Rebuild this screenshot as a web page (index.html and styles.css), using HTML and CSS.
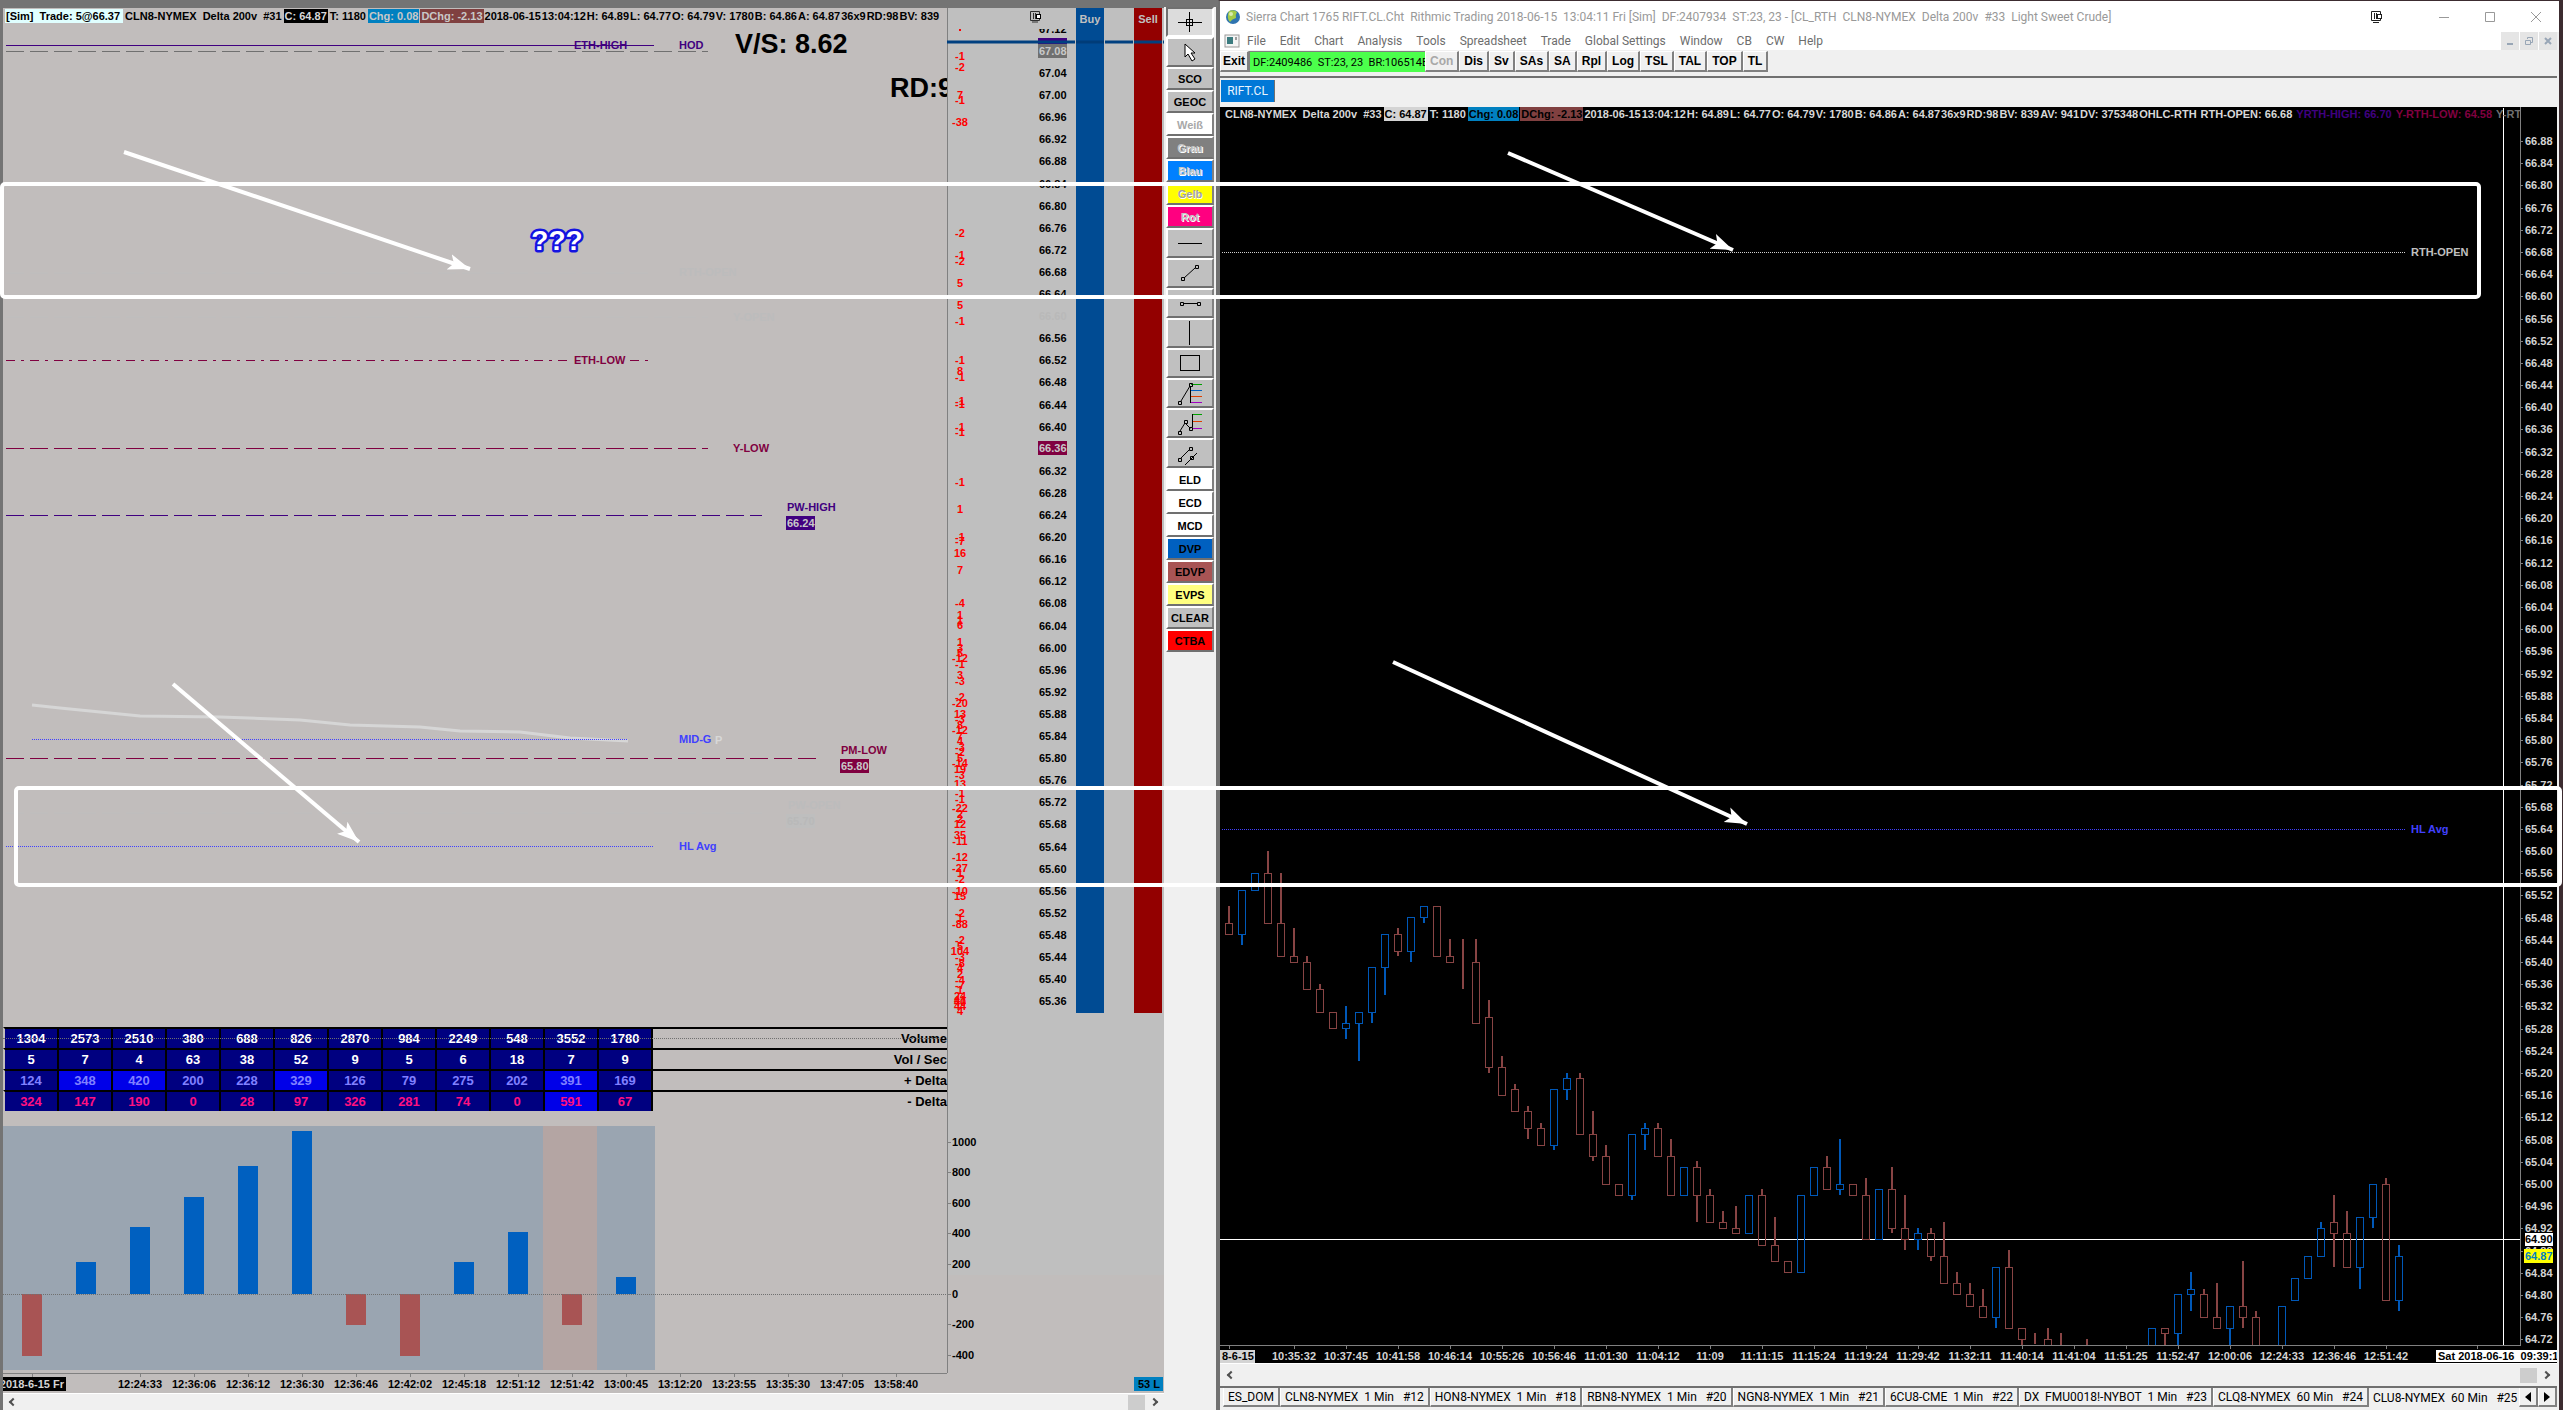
FILE: index.html
```html
<!DOCTYPE html>
<html lang="en">
<head>
<meta charset="utf-8">
<title>Sierra Chart 1765 RIFT.CL.Cht</title>
<link rel="stylesheet" href="styles.css">
</head>
<body>
<main class="desk">
  <section class="dom-window">
    <div class="dom-body">
      <div class="flow-pane">
        <header class="quote-line">
          <span class="tag tag-sim">[Sim]  Trade: 5@66.37</span>
          <span class="tag">CLN8-NYMEX  Delta 200v  #31</span>
          <span class="tag tag-last-dark">C: 64.87</span>
          <span class="tag">T: 1180</span>
          <span class="tag tag-chg">Chg: 0.08</span>
          <span class="tag tag-dchg">DChg: -2.13</span>
          <div class="fields"><span>2018-06-15</span><span>13:04:12</span><span>H: 64.89</span><span>L: 64.77</span><span>O: 64.79</span><span>V: 1780</span><span>B: 64.86</span><span>A: 64.87</span><span>36x9</span><span>RD:98</span><span>BV: 839</span></div>
        </header>
        <svg class="level-chart" aria-label="Price levels">
          <g transform="translate(-3 -24)">
            <path class="faint-line" d="M6 273H654M6 317H708M6 813H762"/>
            <text class="faint" x="679" y="276">RTH-OPEN</text>
            <text class="faint" x="733" y="321">Y-OPEN</text>
            <text class="faint" x="788" y="809">PW-OPEN</text>
            <rect class="faint-box" x="786" y="814" width="29" height="14"/>
            <text class="faint-on" x="787" y="825">65.70</text>

            <path class="high" d="M6 45.500H654"/>
            <path class="gray long-dash" d="M6 51.500H708"/>
            <text class="t-high" x="574" y="49">ETH-HIGH</text>
            <text class="t-high" x="679" y="49">HOD</text>
            <text class="big" x="735" y="53">V/S: 8.62</text>
            <text class="big" x="890" y="97">RD:98</text>

            <path class="low dash-dot" d="M6 360.500H648"/>
            <rect class="pane-fill" x="569" y="352" width="60" height="16"/>
            <text class="t-low" x="574" y="364">ETH-LOW</text>
            <path class="low long-dash" d="M6 448.500H708"/>
            <text class="t-low" x="733" y="452">Y-LOW</text>
            <path class="high long-dash" d="M6 515.500H762"/>
            <text class="t-high" x="787" y="511">PW-HIGH</text>
            <rect class="box-high" x="786" y="516" width="29" height="14"/>
            <text class="t-box" x="787" y="527">66.24</text>

            <path class="vwap" d="M32 705L60 708L100 712L140 716L220 717L300 720L350 725L420 727L460 731L520 732L570 738L628 741"/>
            <path class="mid dots" d="M32 739.500H628"/>
            <text class="t-mid" x="679" y="743">MID-G</text>
            <text class="t-light" x="715" y="744">P</text>
            <path class="low long-dash" d="M6 758.500H816"/>
            <text class="t-low" x="841" y="754">PM-LOW</text>
            <rect class="box-low" x="840" y="759" width="29" height="14"/>
            <text class="t-box" x="841" y="770">65.80</text>
            <path class="mid dots" d="M6 846.500H654"/>
            <text class="t-mid" x="679" y="850">HL Avg</text>
          </g>
        </svg>
        <table class="stats">
          <tbody>
            <tr><td>1304</td><td>2573</td><td>2510</td><td>380</td><td>688</td><td>826</td><td>2870</td><td>984</td><td>2249</td><td>548</td><td>3552</td><td>1780</td><th scope="row">Volume</th></tr>
            <tr><td>5</td><td>7</td><td>4</td><td>63</td><td>38</td><td>52</td><td>9</td><td>5</td><td>6</td><td>18</td><td>7</td><td>9</td><th scope="row">Vol / Sec</th></tr>
            <tr class="plus"><td>124</td><td class="hot">348</td><td class="hot">420</td><td>200</td><td>228</td><td class="hot">329</td><td>126</td><td>79</td><td>275</td><td>202</td><td class="hot">391</td><td>169</td><th scope="row">+ Delta</th></tr>
            <tr class="minus"><td>324</td><td>147</td><td>190</td><td>0</td><td>28</td><td>97</td><td>326</td><td>281</td><td>74</td><td>0</td><td class="hot">591</td><td>67</td><th scope="row">- Delta</th></tr>
          </tbody>
        </table>
        <svg class="delta-chart" aria-label="Delta histogram">
          <g transform="translate(-3 -1111)">
            <rect fill="#9aa5b1" x="3" y="1126" width="652" height="244"/>
            <rect fill="#b4a5a3" x="543" y="1126" width="54" height="244"/>
            <g id="delta-bars"></g>
            <path class="zero" d="M3 1294.500H947"/>
          </g>
        </svg>
        <svg class="time-axis" aria-label="Time axis"><g id="left-times" transform="translate(-3 -1373)"></g></svg>
      </div>
      <div class="ladder">
        <svg class="ladder-chart" aria-label="Price ladder">
          <g transform="translate(-947 -8)">
            <rect x="947" y="8" width="217" height="1267" fill="#bfbfbf"/>
            <rect x="1076" y="8" width="28" height="1005" fill="#004b93"/>
            <rect x="1134" y="8" width="28" height="1005" fill="#930000"/>
            <text class="side" x="1090" y="23">Buy</text>
            <text class="side" x="1148" y="23">Sell</text>
            <path d="M947.500 8V1373" stroke="#808080"/>
            <g id="ladder-prices"></g>
            <rect x="1038" y="20" width="30" height="9" fill="#bfbfbf"/>
            <rect class="box-high" x="1038" y="38" width="29" height="7"/>
            <path d="M947 42H1075M1105 42H1133M1163 42H1164" stroke="#004080" stroke-width="3"/>
            <path d="M1076 42H1104" stroke="#003c78" stroke-width="3"/>
            <path d="M1134 42H1162" stroke="#004080" stroke-width="3"/>
            <rect x="1038" y="44" width="29" height="14" fill="#707070"/>
            <text class="t-box" x="1039" y="55">67.08</text>
            <rect class="box-low" x="1038" y="441" width="29" height="14"/>
            <text class="t-box" x="1039" y="452">66.36</text>
            <g id="ladder-flow"></g>
            <g id="delta-scale"></g>
            <rect x="1134" y="1377" width="29" height="14" fill="#0080c0"/>
            <text class="axis-text mid-anchor" x="1149" y="1388">53 L</text>
            <g fill="none" stroke="#303030"><path d="M1030.500 11.500H1039.500V20.500H1030.500Z"/><path d="M1033.500 13V19M1035.500 13V19M1032 22H1038"/><rect x="1036.500" y="14.500" width="4" height="4" fill="#fff" stroke="#000"/></g>
          </g>
        </svg>
      </div>
      <nav class="tools" aria-label="Drawing tools">
        <button class="tool pressed" aria-label="Crosshair"><svg width="30" height="24"><path d="M3 12.500H27M14.500 2V22" stroke="#000"/><rect x="11.500" y="9.500" width="6" height="6" fill="none" stroke="#000"/></svg></button>
        <button class="tool" aria-label="Pointer"><svg width="30" height="24"><path d="M10 4V17L13 14L17 21L20 19L16 13H20Z" fill="#fff" stroke="#000"/></svg></button>
        <button class="tool word">SCO</button>
        <button class="tool word">GEOC</button>
        <button class="tool word off white">Weiß</button>
        <button class="tool word off grey">Grau</button>
        <button class="tool word off blue">Blau</button>
        <button class="tool word off yellow">Gelb</button>
        <button class="tool word off pink">Rot</button>
        <button class="tool" aria-label="Horizontal line"><svg width="30" height="24"><path d="M3 12.500H27" stroke="#000"/></svg></button>
        <button class="tool" aria-label="Line"><svg width="30" height="24" fill="none" stroke="#000"><path d="M9 17L20 7"/><path d="M6.500 16.500H9.500V19.500H6.500ZM20.500 4.500H23.500V7.500H20.500Z"/></svg></button>
        <button class="tool" aria-label="Horizontal ray"><svg width="30" height="24" fill="none" stroke="#000"><path d="M8 12.500H22"/><path d="M5.500 11.500H8.500V14.500H5.500ZM22.500 11.500H25.500V14.500H22.500Z"/></svg></button>
        <button class="tool" aria-label="Vertical line"><svg width="30" height="24"><path d="M14.500 0V24" stroke="#000"/></svg></button>
        <button class="tool" aria-label="Rectangle"><svg width="30" height="24"><rect x="5.500" y="4.500" width="19" height="15" fill="none" stroke="#000"/></svg></button>
        <button class="tool" aria-label="Retracement"><svg width="30" height="24" fill="none"><path d="M16 3.500H27" stroke="#00a000"/><path d="M16 9.500H27" stroke="#0060c0"/><path d="M16 15.500H27" stroke="#e04000"/><path d="M16 21.500H27" stroke="#a000c0"/><path d="M6 20L15 5M15.500 5V22M3.500 20.500H6.500V23.500H3.500ZM14.500 2.500H17.500V5.500H14.500Z" stroke="#000"/></svg></button>
        <button class="tool" aria-label="Extension"><svg width="30" height="24" fill="none"><path d="M18 3.500H27" stroke="#00a000"/><path d="M18 10.500H27" stroke="#e04000"/><path d="M18 17.500H27" stroke="#a000c0"/><path d="M5 20L10 12L15 17L17.500 16V3M3.500 20.500H6.500V23.500H3.500ZM9.500 9.500H12.500V12.500H9.500ZM14.500 16.500H17.500V19.500H14.500Z" stroke="#000"/></svg></button>
        <button class="tool" aria-label="Parallel lines"><svg width="30" height="24" fill="none" stroke="#000"><path d="M6 17L15 8M10 24L22 12M3.500 17.500H6.500V20.500H3.500ZM14.500 6.500H17.500V9.500H14.500ZM15.500 15.500H18.500V18.500H15.500Z"/></svg></button>
        <button class="tool word white">ELD</button>
        <button class="tool word white">ECD</button>
        <button class="tool word white">MCD</button>
        <button class="tool word deep">DVP</button>
        <button class="tool word brick">EDVP</button>
        <button class="tool word cream">EVPS</button>
        <button class="tool word">CLEAR</button>
        <button class="tool word red">CTBA</button>
      </nav>
      <div class="scroll dom-scroll">
        <span class="chev left"></span><span class="thumb"></span><span class="chev right"></span>
      </div>
    </div>
  </section>

  <section class="chart-window">
    <header class="title-bar">
      <svg class="app-icon" width="16" height="16"><circle cx="8" cy="8" r="7" fill="#2f74b0"/><path d="M4 2Q9 0 12 3Q10 6 11 9Q7 10 5 13Q1 9 4 2Z" fill="#a4cc48"/><circle cx="6" cy="5" r="2" fill="#d9ecb0"/></svg>
      <h1>Sierra Chart 1765 RIFT.CL.Cht  Rithmic Trading 2018-06-15  13:04:11 Fri [Sim]  DF:2407934  ST:23, 23 - [CL_RTH  CLN8-NYMEX  Delta 200v  #33  Light Sweet Crude]</h1>
      <svg class="monitor" width="14" height="14" fill="none" stroke="#202020"><path d="M1.500 1.500H10.500V10.500H1.500ZM4.500 3V9M6.500 3V9M3 12.500H9"/><rect x="7.500" y="4.500" width="4" height="4" fill="#fff"/></svg>
      <button class="cap" aria-label="Minimize"><svg width="12" height="12"><path d="M1 6.500H11" stroke="#999"/></svg></button>
      <button class="cap" aria-label="Maximize"><svg width="12" height="12"><path d="M1.500 1.500H10.500V10.500H1.500Z" fill="none" stroke="#999"/></svg></button>
      <button class="cap" aria-label="Close"><svg width="12" height="12"><path d="M1 1L11 11M11 1L1 11" stroke="#999"/></svg></button>
    </header>
    <nav class="menu-bar">
      <svg width="16" height="14"><rect x="1" y="1" width="14" height="12" fill="#f4f4f4" stroke="#999"/><rect x="3" y="3" width="6" height="7" fill="#3c7c80"/><path d="M12 3V6" stroke="#444"/></svg>
      <button>File</button><button>Edit</button><button>Chart</button><button>Analysis</button><button>Tools</button><button>Spreadsheet</button><button>Trade</button><button>Global Settings</button><button>Window</button><button>CB</button><button>CW</button><button>Help</button>
      <div class="mdi">
        <button aria-label="Minimize chart"><svg width="10" height="10"><path d="M2 8H8" stroke="#98a6b6" stroke-width="2"/></svg></button>
        <button aria-label="Restore chart"><svg width="10" height="10" fill="none" stroke="#98a6b6"><path d="M3.500 3V1.500H8.500V6.500H7M1.500 4.500H6.500V8.500H1.500Z"/></svg></button>
        <button aria-label="Close chart"><svg width="10" height="10"><path d="M2 2L8 8M8 2L2 8" stroke="#98a6b6" stroke-width="2"/></svg></button>
      </div>
    </nav>
    <div class="control-bar">
      <button>Exit</button>
      <output class="feed">DF:2409486  ST:23, 23  BR:106514B</output>
      <button disabled>Con</button><button>Dis</button><button>Sv</button><button>SAs</button><button>SA</button><button>Rpl</button><button>Log</button><button>TSL</button><button>TAL</button><button>TOP</button><button>TL</button>
    </div>
    <div class="book-bar"><button>RIFT.CL</button></div>
    <div class="plot">
      <svg class="candle-chart" aria-label="Candlestick chart">
        <defs><clipPath id="plot-clip"><rect x="1220" y="107" width="1300" height="1238"/></clipPath></defs>
        <g transform="translate(-1220 -107)">
          <path class="open dots" d="M1222 252.500H2406"/>
          <text class="t-open" x="2411" y="256">RTH-OPEN</text>
          <path class="mid dots" d="M1222 829.500H2406"/>
          <text class="t-mid" x="2411" y="833">HL Avg</text>
          <path d="M1220 1239.500H2520" stroke="#fff"/>
          <g id="candles" clip-path="url(#plot-clip)"></g>
          <path d="M2503.500 108V1345" stroke="#fff"/>
          <path d="M2520.500 107V1345M1220 1345.500H2521" stroke="#808080"/>
          <g id="right-prices"></g>
          <rect x="2525" y="1233" width="28" height="13" fill="#fff"/>
          <text class="axis-text" x="2525" y="1243">64.90</text>
          <rect x="2524" y="1249" width="29" height="14" fill="#ff0"/>
          <text class="t-last" x="2525" y="1260">64.87</text>
          <g id="right-times"></g>
          <rect x="1220" y="1350" width="35" height="13" fill="#d4d4d4"/>
          <text class="axis-text" x="1222" y="1360">8-6-15</text>
          <rect x="2436" y="1350" width="121" height="12" fill="#fff"/>
          <text class="axis-text" x="2438" y="1360">Sat 2018-06-16  09:39:11</text>
        </g>
      </svg>
      <div class="quote-line dark">
        <span class="tag">CLN8-NYMEX  Delta 200v  #33</span>
        <span class="tag tag-last-light">C: 64.87</span>
        <span class="tag">T: 1180</span>
        <span class="tag tag-chg">Chg: 0.08</span>
        <span class="tag tag-dchg">DChg: -2.13</span>
        <div class="fields"><span>2018-06-15</span><span>13:04:12</span><span>H: 64.89</span><span>L: 64.77</span><span>O: 64.79</span><span>V: 1780</span><span>B: 64.86</span><span>A: 64.87</span><span>36x9</span><span>RD:98</span><span>BV: 839</span><span>AV: 941</span><span>DV: 375348</span><span>OHLC-RTH</span><span class="study">RTH-OPEN: 66.68</span><span class="study t-yhigh">YRTH-HIGH: 66.70</span><span class="study t-ylow">Y-RTH-LOW: 64.58</span><span class="study t-yrt">Y-RTH</span></div>
      </div>
    </div>
    <div class="scroll"><span class="chev left"></span><span class="thumb"></span><span class="chev right"></span></div>
    <nav class="sheet-tabs">
      <button>ES_DOM</button><button>CLN8-NYMEX  1 Min   #12</button><button>HON8-NYMEX  1 Min   #18</button><button>RBN8-NYMEX  1 Min   #20</button><button>NGN8-NYMEX  1 Min   #21</button><button>6CU8-CME  1 Min   #22</button><button>DX  FMU0018!-NYBOT  1 Min   #23</button><button>CLQ8-NYMEX  60 Min   #24</button><button class="cut">CLU8-NYMEX  60 Min   #25</button>
      <button class="step" aria-label="Previous tabs"><svg width="8" height="12"><path d="M7 1V11L1 6Z"/></svg></button>
      <button class="step" aria-label="Next tabs"><svg width="8" height="12"><path d="M1 1V11L7 6Z"/></svg></button>
    </nav>
  </section>

  <svg class="notes" viewBox="0 0 2563 1410" preserveAspectRatio="none" aria-label="Annotations">
    <defs><marker id="head" markerUnits="userSpaceOnUse" markerWidth="26" markerHeight="20" refX="22" refY="9" orient="auto"><path d="M0 1L22 9L0 17L5 9Z" fill="#fff"/></marker></defs>
    <g fill="none" stroke="#fff" stroke-width="4">
      <rect x="2" y="184" width="2477" height="113" rx="3"/>
      <rect x="16" y="788" width="2544" height="97" rx="3"/>
      <path d="M124 152L470 269" marker-end="url(#head)"/>
      <path d="M1508 153L1733 250" marker-end="url(#head)"/>
      <path d="M173 684L359 842" marker-end="url(#head)"/>
      <path d="M1393 662L1747 824" marker-end="url(#head)"/>
    </g>
    <text class="doubt" x="557" y="250">???</text>
  </svg>
</main>
<script src="charts.js"></script>
</body>
</html>
```

FILE: styles.css
```css
* { box-sizing: border-box; }
body {
  margin: 0;
  background: #747474;
  font: bold 11px/14px "Liberation Sans", Arial, sans-serif;
  color: #000;
}
button { font: inherit; color: inherit; margin: 0; padding: 0; border: 0; background: none; white-space: pre; }
svg { display: block; }
text { font: bold 11px "Liberation Sans", Arial, sans-serif; white-space: pre; }

.desk { position: relative; display: grid; grid-template-columns: 1218fr 1345fr; height: 100vh; min-height: 900px; overflow: hidden; }

/* Left window: levels, ladder and tools */
.dom-window { display: flex; flex-direction: column; min-width: 0; padding-top: 8px; background: #747474; border-left: 3px solid #747474; }
.dom-body { flex: 1; min-height: 0; display: grid; grid-template-columns: 1fr 217px 54px; grid-template-rows: 1fr 17px; }
.flow-pane { display: flex; flex-direction: column; min-width: 0; background: #c1bdbc; }
.quote-line { display: flex; flex: none; height: 16px; padding: 1px 2px; gap: 1px; overflow: hidden; white-space: pre; }
.tag { flex: none; padding: 0 1px; height: 14px; }
.fields { display: flex; flex: none; gap: 1px; }
.tag-sim { background: #e0ffff; padding-right: 3px; }
.tag-last-dark { background: #000; color: #d8d8d8; }
.tag-last-light { background: #d4d4d4; color: #000; }
.tag-chg { background: #0080c0; color: #c8c8c8; }
.tag-dchg { background: #804040; color: #c8c8c8; }
.level-chart { flex: 1; min-height: 0; width: 100%; }
.delta-chart { flex: none; width: 100%; height: 262px; }
.time-axis { flex: none; width: 100%; height: 20px; }

.high { stroke: #400080; }
.low { stroke: #800040; }
.gray { stroke: #707070; }
.mid { stroke: #4040ff; }
.open { stroke: #d0d0d0; }
.zero { stroke: #707070; stroke-dasharray: 1 1; }
.dots { stroke-dasharray: 1 1; }
.long-dash { stroke-dasharray: 18 6; }
.dash-dot { stroke-dasharray: 9 6 3 6; }
.vwap { fill: none; stroke: #d6d6d6; stroke-width: 3; }
.faint-line { stroke: #bebebe; stroke-dasharray: 18 6; }
.faint { fill: #bcbcbc; }
.faint-box { fill: #bebebe; }
.faint-on { fill: #b9b9b9; }
.pane-fill { fill: #c1bdbc; }
.box-high { fill: #400080; }
.box-low { fill: #800040; }
.t-high { fill: #400080; }
.t-low { fill: #800040; }
.t-mid { fill: #4040ff; }
.t-open { fill: #c0c0c0; }
.t-light { fill: #d8d8d8; }
.t-box { fill: #c8c8c8; }
.t-last { fill: #0080c0; }
.t-flow { fill: #f00; text-anchor: middle; }
.big { font-size: 27px; }
.side { fill: #c0c0c0; text-anchor: middle; }
.axis-text { fill: #000; }
.axis-light { fill: #d4d4d4; }
.mid-anchor { text-anchor: middle; }

.stats { position: relative; width: 100%; table-layout: fixed; border-spacing: 0; font-size: 13px; line-height: 19px; color: #fff; }
.stats::after { content: ""; position: absolute; left: 0; right: 0; top: 11px; border-top: 1px dotted #707070; }
.stats td, .stats th { height: 21px; padding: 0; border-top: 2px solid #000; }
.stats td { width: 54px; text-align: center; background: #000080; border-right: 2px solid #000; }
.stats td:first-child { width: 56px; border-left: 2px solid #c1bdbc; }
.stats th { text-align: right; color: #000; }
.stats .hot { background: #0000e8; }
.stats .plus td { color: #8080ff; }
.stats .minus td { color: #ff1080; }

.ladder { min-width: 0; background: #c1bdbc; }
.ladder-chart { width: 100%; height: 100%; }

.tools { grid-row: 1 / 3; grid-column: 3; display: flex; flex-direction: column; margin-top: -1px; padding-left: 2px; padding-right: 2px; background: #f0f0f0; border-right: 2px solid #707070; }
.tool { display: flex; align-items: center; justify-content: center; height: 30px; background: #c0c0c0; border: 2px solid #fff; border-right-color: #808080; border-bottom-color: #707070; }
.tool.pressed { background: #dcdcdc; border-color: #707070 #fff #fff #707070; }
.tool.word { height: 23px; }
.tool.off { color: #c4c4c4; text-shadow: 1px 1px #fff; }
.tool.white { background: #fff; }
.tool.white.off { color: #a8a8a8; }
.tool.grey { background: #808080; }
.tool.blue { background: #0080ff; }
.tool.yellow { background: #ff0; color: #a0a0a0; }
.tool.pink { background: #ff0080; }
.tool.deep { background: #0060c0; }
.tool.brick { background: #a85454; }
.tool.cream { background: #ffff80; }
.tool.red { background: #f00; }

.scroll { display: flex; align-items: center; gap: 4px; height: 23px; padding: 0 6px; background: #f0f0f0; border-top: 1px solid #fff; }
.dom-scroll { grid-column: 1 / 3; height: 17px; padding: 0 5px; }
.thumb { width: 17px; height: 15px; margin-left: auto; background: #cdcdcd; }
.chev { width: 6px; height: 6px; margin: 0 2px; border: solid #505050; border-width: 2px 0 0 2px; transform: rotate(-45deg); }
.chev.right { transform: rotate(135deg); }

/* Right window: candle chart */
.chart-window { display: flex; flex-direction: column; min-width: 0; background: #f0f0f0; border: solid #3c2c30; border-width: 1px 4px 0 2px; border-left-color: #707070; padding-right: 2px; }
.title-bar, .menu-bar, .sheet-tabs, .book-bar { font: 12px/16px Roboto, "Open Sans", sans-serif; }
.title-bar { display: flex; align-items: center; flex: none; height: 31px; padding-left: 5px; background: #fff; color: #999; margin-right: -2px; }
.title-bar h1 { flex: 1; min-width: 0; margin: 0 0 0 5px; font: inherit; white-space: pre; overflow: hidden; }
.monitor { margin-right: 37px; }
.cap { display: flex; align-items: center; justify-content: center; width: 46px; height: 30px; }
.menu-bar { display: flex; align-items: center; flex: none; gap: 14px; height: 18px; padding-left: 4px; background: #fff; color: #6d6d6d; }
.menu-bar > svg { margin-right: -7px; }
.mdi { display: flex; gap: 1px; margin-left: auto; }
.mdi button { display: flex; align-items: center; justify-content: center; width: 18px; height: 18px; background: #e5e5e5; }
.control-bar { display: flex; flex: none; height: 28px; padding: 1px 0 4px; border-bottom: 2px solid #707070; font-size: 12px; }
.control-bar button { padding: 0 4px; border: 1px solid #fff; border-right: 2px solid #808080; border-bottom: 2px solid #808080; }
.control-bar button:first-child { padding: 0 2px; }
.control-bar button:disabled { color: #a8a8a8; }
.feed { font: 11px/16px Roboto, "Open Sans", sans-serif; width: 176px; overflow: hidden; padding: 3px 3px; background: #4cff4c; border: 1px solid #808080; border-width: 1px 0 0 1px; white-space: pre; }
.book-bar { flex: none; height: 29px; padding: 2px 1px 5px; border-bottom: 0; }
.book-bar button { height: 22px; width: 54px; background: #0078d7; color: #e8f4ff; border-right: 1px solid #707070; }
.plot { position: relative; flex: 1; min-height: 0; background: #000; }
.candle-chart { position: absolute; inset: 0; width: 100%; height: 100%; }
.quote-line.dark { position: relative; margin-right: 37px; padding: 0 4px; color: #d8d8d8; }
.dark .tag-last-light, .dark .tag-chg, .dark .tag-dchg { color: #000; }
.study { margin-left: 3px; }
.t-yhigh { color: #400080; }
.t-ylow { color: #800040; }
.t-yrt { color: #707070; }
.sheet-tabs { display: flex; flex: none; height: 24px; padding: 0 0 3px 3px; border-top: 2px solid #707070; overflow: hidden; }
.sheet-tabs button { flex: none; padding: 0 4px; border: solid #808080; border-width: 0 2px 2px 0; border-left: 1px solid #fff; }
.sheet-tabs .cut { flex: 1 1 0; min-width: 0; padding-right: 0; overflow: hidden; text-align: left; border: 0; }
.sheet-tabs .step { display: flex; align-items: center; justify-content: center; width: 19px; padding: 0; }

/* Marks drawn over both windows */
.notes { position: absolute; inset: 0; width: 100%; height: 100%; pointer-events: none; }
.doubt { font-size: 28px; fill: #fff; stroke: #1414e0; stroke-width: 5px; stroke-linejoin: round; paint-order: stroke; text-anchor: middle; }
```

FILE: charts.js
```js
const NS = "http://www.w3.org/2000/svg";
const by = id => document.getElementById(id);

function add(parent, name, attrs, text) {
  const node = document.createElementNS(NS, name);
  for (const key in attrs) node.setAttribute(key, attrs[key]);
  if (text !== undefined) node.textContent = text;
  parent.appendChild(node);
}

// Delta histogram: distance of each bar's end from the zero line
[-62, 32, 67, 97, 128, 163, -31, -62, 32, 62, -31, 17].forEach((v, i) => {
  add(by("delta-bars"), "rect", {
    x: 22 + i * 54, y: v > 0 ? 1294 - v : 1294, width: 20, height: Math.abs(v),
    fill: v > 0 ? "#0060c0" : "#a85454"
  });
});

[1000, 800, 600, 400, 200, 0, -200, -400].forEach((v, i) => {
  const y = Math.round(1142 + i * 30.4);
  add(by("delta-scale"), "path", { d: `M948 ${y + 0.5}h3`, stroke: "#808080" });
  add(by("delta-scale"), "text", { x: 952, y: y + 4, class: "axis-text" }, v);
});

// Time axis, left
const lt = by("left-times");
add(lt, "path", { d: "M3 1373.5H948M32.5 1374v3", stroke: "#808080" });
add(lt, "rect", { x: 3, y: 1377, width: 63, height: 14, fill: "#000" });
add(lt, "text", { x: 64, y: 1388, class: "axis-light", "text-anchor": "end" }, "2018-6-15 Fr");
"12:24:33 12:36:06 12:36:12 12:36:30 12:36:46 12:42:02 12:45:18 12:51:12 12:51:42 13:00:45 13:12:20 13:23:55 13:35:30 13:47:05 13:58:40"
  .split(" ").forEach((t, i) => {
    const x = 140 + i * 54;
    add(lt, "path", { d: `M${x + 0.5} 1374v3`, stroke: "#808080" });
    add(lt, "text", { x, y: 1388, class: "axis-text mid-anchor" }, t);
  });

// Ladder prices
for (let i = -2; i <= 42; i++) {
  const price = (67.04 - i * 0.04).toFixed(2);
  if (price === "67.08" || price === "66.36") continue;
  add(by("ladder-prices"), "text", {
    x: 1039, y: Math.round(77 + i * 22.1), class: price === "66.60" ? "faint-on" : "axis-text"
  }, price);
}

// Net flow per price: value, centre
const flow = [
  [-1, 56], [-2, 67], [7, 95], [-1, 100], [-38, 122], [-2, 233], [-1, 255], [-2, 261], [5, 283], [5, 305],
  [-1, 321], [-1, 360], [8, 371], [-1, 377], [-1, 401], [-1, 404], [-1, 427], [-1, 432], [-1, 482], [1, 509],
  [-1, 537], [-7, 541], [16, 553], [7, 570], [-4, 603], [1, 615], [1, 620], [6, 625], [1, 642], [3, 648],
  [5, 653], [-12, 658], [-1, 664], [3, 675], [-3, 681], [-2, 697], [-20, 703], [13, 714], [-3, 719], [8, 725],
  [-12, 730], [7, 736], [4, 741], [-3, 747], [-2, 752], [5, 758], [-14, 763], [19, 769], [-3, 775], [13, 784],
  [-1, 793], [-1, 799], [-22, 808], [2, 814], [2, 819], [12, 824], [35, 835], [-11, 841], [-12, 857],
  [-27, 868], [1, 873], [-2, 879], [-10, 891], [15, 896], [-2, 913], [1, 918], [-88, 924], [-2, 940], [5, 946],
  [104, 951], [-3, 957], [-8, 963], [4, 968], [2, 974], [-4, 980], [-7, 985], [1, 990], [24, 996], [41, 1000],
  [40, 1002], [44, 1006], [4, 1011]
];
flow.forEach(([v, y]) => add(by("ladder-flow"), "text", { x: 960, y: y + 4, class: "t-flow" }, v));
add(by("ladder-flow"), "rect", { x: 959, y: 29, width: 2, height: 2, fill: "#f00" });

// Right price axis
for (let i = 0; i <= 54; i++) {
  const y = Math.round(141 + i * 22.19);
  add(by("right-prices"), "path", { d: `M2521 ${y + 0.5}h2`, stroke: "#808080" });
  add(by("right-prices"), "text", { x: 2525, y: y + 4, class: "axis-light" }, (66.88 - i * 0.04).toFixed(2));
}

// Time axis, right
const rt = by("right-times");
"10:35:32 10:37:45 10:41:58 10:46:14 10:55:26 10:56:46 11:01:30 11:04:12 11:09 11:11:15 11:15:24 11:19:24 11:29:42 11:32:11 11:40:14 11:41:04 11:51:25 11:52:47 12:00:06 12:24:33 12:36:46 12:51:42"
  .split(" ").forEach((t, i) => {
    const x = 1294 + i * 52;
    add(rt, "path", { d: `M${x + 0.5} 1346v3`, stroke: "#808080" });
    add(rt, "text", { x, y: 1360, class: "axis-light mid-anchor" }, t);
  });
add(rt, "path", { d: "M1229.5 1346v3M2477.5 1346v3", stroke: "#808080" });

// Candles in cents from 64.90: slot, direction, high, body top, body bottom, low
const candles = [
  [0,"R",60,57,55,55],[1,"B",63,63,55,53],[2,"B",66,66,63,63],[3,"R",70,66,57,57],[4,"R",66,57,51,51],
  [5,"R",56,51,50,50],[6,"R",51,50,45,45],[7,"R",46,45,41,41],[8,"R",41,41,38,38],[9,"B",42,39,38,36],
  [10,"B",41,41,39,32],[11,"B",49,49,41,39],[12,"B",55,55,49,44],[13,"R",56,55,52,51],[14,"B",58,58,52,50],
  [15,"B",60,60,58,57],[16,"R",60,60,51,51],[17,"R",54,51,50,50],[18,"R",54,50,50,45],[19,"R",54,50,39,39],
  [20,"R",43,40,31,30],[21,"R",33,31,26,26],[22,"R",28,27,23,23],[23,"R",24,23,20,18],[24,"R",21,20,17,17],
  [25,"B",27,27,17,16],[26,"B",30,29,27,25],[27,"R",30,29,19,19],[28,"R",23,19,15,14],[29,"R",17,15,10,10],
  [30,"R",10,10,8,8],[31,"B",19,19,8,7],[32,"B",21,20,19,16],[33,"R",21,20,15,15],[34,"R",18,15,8,8],
  [35,"B",13,13,8,8],[36,"R",14,13,8,3],[37,"R",9,8,3,3],[38,"R",5,3,2,2],[39,"R",6,2,1,1],
  [40,"B",8,8,1,1],[41,"R",9,8,-1,-1],[42,"R",4,-1,-4,-4],[43,"R",-4,-4,-6,-6],[44,"B",8,8,-6,-6],
  [45,"B",13,13,8,8],[46,"R",15,13,9,9],[47,"B",18,10,9,8],[48,"R",10,10,8,8],[49,"R",11,8,0,0],
  [50,"B",9,9,0,0],[51,"R",13,9,2,1],[52,"R",8,2,0,-2],[53,"B",2,1,0,-2],[54,"R",2,1,-3,-4],
  [55,"R",3,-3,-8,-8],[56,"R",-6,-8,-10,-10],[57,"R",-8,-10,-12,-12],[58,"R",-9,-12,-14,-14],[59,"B",-5,-5,-14,-16],
  [60,"R",-2,-5,-16,-16],[61,"R",-16,-16,-18,-30],[62,"R",-17,-18,-18,-19],[63,"R",-16,-18,-30,-30],[64,"R",-17,-25,-30,-30],
  [66,"R",-18,-25,-30,-30],[71,"B",-16,-16,-30,-30],[72,"R",-16,-16,-17,-30],[73,"B",-10,-10,-17,-30],[74,"B",-6,-9,-10,-13],
  [75,"R",-9,-10,-14,-14],[76,"R",-8,-14,-16,-16],[77,"B",-12,-12,-16,-30],[78,"R",-4,-12,-14,-16],[79,"R",-13,-14,-30,-30],
  [81,"B",-12,-12,-30,-30],[82,"B",-7,-7,-11,-11],[83,"B",-3,-3,-7,-7],[84,"B",3,2,-3,-3],[85,"R",8,3,1,-5],
  [86,"R",5,1,-5,-5],[87,"B",4,4,-5,-9],[88,"B",10,10,4,2],[89,"R",11,10,-11,-11],[90,"B",-1,-3,-11,-13]
];
candles.forEach(([slot, dir, high, top, bottom, low]) => {
  const x = 1229 + slot * 13;
  const y = n => Math.round(1239 - n * 5.547);
  const color = dir === "B" ? "#0058b8" : "#884444";
  add(by("candles"), "path", { d: `M${x} ${y(high)}V${y(top)}M${x} ${y(bottom)}V${y(low)}`, stroke: color, "stroke-width": 2 });
  add(by("candles"), "rect", {
    x: x - 3.5, y: y(top) + 0.5, width: 7, height: y(bottom) - y(top), fill: "none", stroke: color
  });
});
```
